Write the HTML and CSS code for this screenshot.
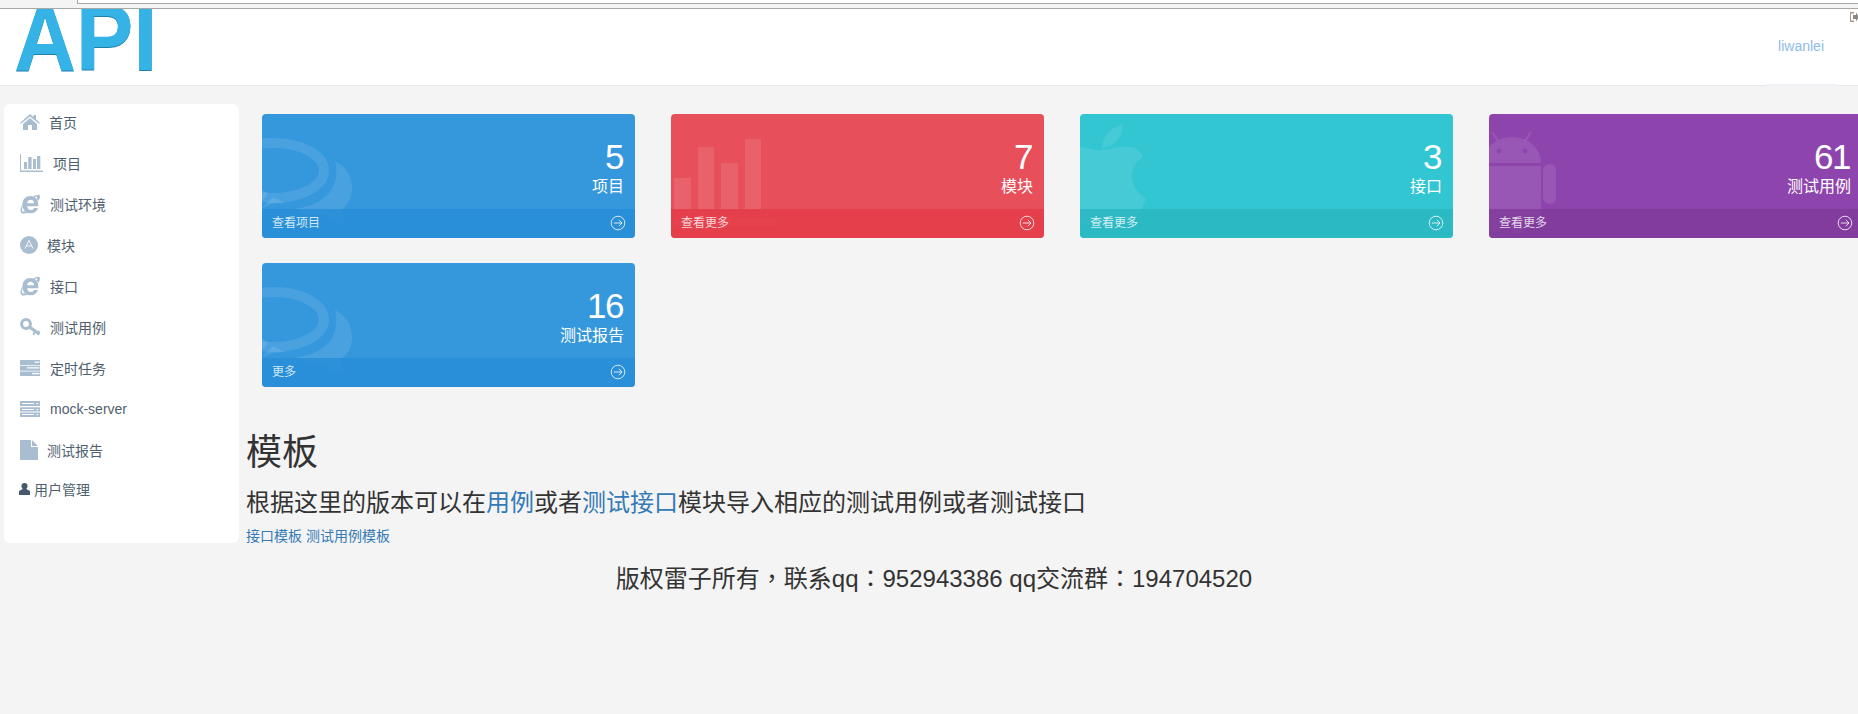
FILE: index.html

```html
<!DOCTYPE html>
<html lang="en">

<head>
  <meta charset="UTF-8">
  <meta name="viewport" content="width=device-width, initial-scale=1.0">
  <title>API</title>
  <link rel="stylesheet" href="styles.css">
</head>

<body>

  <div class="browser-strip">
    <div class="address-box"></div>
  </div>

  <header class="topbar">
    <a class="logo" href="#"><span class="logo-text">API</span></a>
    <a class="user-link" href="#">liwanlei</a>
    <svg class="exit-icon" viewBox="0 0 10 12">
      <path d="M1 1h4v1.500H2v7h3V11H1z" fill="#a89a86" />
      <path d="M4 4h3V1.500L10 6l-3 4.500V8H4z" fill="#888" />
    </svg>
    <span class="user-underline"></span>
  </header>

  <div class="layout">
    <nav class="sidebar">
      <a class="nav-item" href="#">
        <svg class="nav-icon" viewBox="0 0 20 16"><path d="M10 0l3.500 3V1h2.500v4.300L20 9l-1 .8-9-7.300-9 7.300L0 9zM3 10l7-6 7 6v6h-5v-5H8v5H3z" /></svg>
        <span class="nav-label">首页</span>
      </a>
      <a class="nav-item" href="#">
        <svg class="nav-icon nav-icon-chart" viewBox="0 0 23 18"><path d="M0 0h1v16.500h22V18H0zM4 8h3v7H4zM8.200 3h3.400v12H8.200zM13 5h3v10h-3zM17 2h3.300v13H17z" /></svg>
        <span class="nav-label nav-label-chart">项目</span>
      </a>
      <a class="nav-item" href="#">
        <svg class="nav-icon nav-icon-ie" viewBox="0 0 20 20"><use href="#ie-shape" /></svg>
        <span class="nav-label nav-label-ie">测试环境</span>
      </a>
      <a class="nav-item" href="#">
        <svg class="nav-icon nav-icon-round" viewBox="0 0 18 18"><circle cx="9" cy="9" r="9" /><path d="M5 12.500L9 4.500l4 8M6.500 10h5" fill="none" stroke="#fff" stroke-width="0.900" /></svg>
        <span class="nav-label">模块</span>
      </a>
      <a class="nav-item" href="#">
        <svg class="nav-icon nav-icon-ie" viewBox="0 0 20 20"><use href="#ie-shape" /></svg>
        <span class="nav-label nav-label-ie">接口</span>
      </a>
      <a class="nav-item" href="#">
        <svg class="nav-icon nav-icon-key" viewBox="0 0 20 18">
          <circle cx="6" cy="6" r="4.400" fill="none" stroke="#a9bdd0" stroke-width="3" />
          <path d="M9.500 9l9 6.500" fill="none" stroke="#a9bdd0" stroke-width="3" />
          <path d="M14.500 14l-1.200 3M18 13l1.500 1.500-1.500 2.500" fill="none" stroke="#a9bdd0" stroke-width="1.800" />
        </svg>
        <span class="nav-label nav-label-ie">测试用例</span>
      </a>
      <a class="nav-item" href="#">
        <svg class="nav-icon nav-icon-server" viewBox="0 0 20 16"><path fill-rule="evenodd" d="M0 0h20v5H0zM14.500 1.500v1.200h5V1.500zM0 5.700h20v5H0zM7 7.200v1.200h12.500V7.200zM0 11.500h20V16H0zM12 13v1.200h7.500V13z" /></svg>
        <span class="nav-label nav-label-ie">定时任务</span>
      </a>
      <a class="nav-item" href="#">
        <svg class="nav-icon nav-icon-server" viewBox="0 0 20 16"><path fill-rule="evenodd" d="M0 0h20v5H0zM2 2v1h12V2zM16.500 2v1.200h1.600V2zM0 6.300h20v4.300H0zM2 8v1h12V8zM16.500 8v1.200h1.600V8zM0 11.500h20V16H0zM2 13v1h12v-1zM16.500 13v1.200h1.600V13z" /></svg>
        <span class="nav-label nav-label-ie">mock-server</span>
      </a>
      <a class="nav-item" href="#">
        <svg class="nav-icon nav-icon-file" viewBox="0 0 18 20"><path d="M0 0h11v7h7v13H0zM12 0l6 6h-6z" /></svg>
        <span class="nav-label">测试报告</span>
      </a>
      <a class="nav-item nav-item-small" href="#">
        <svg class="user-icon" viewBox="0 0 11 12"><path d="M5.500 0a3 3 0 0 1 3 3.300c0 1-.5 2-1.200 2.700L11 8v4H0V8l3.700-2C3 5.300 2.500 4.300 2.500 3.300a3 3 0 0 1 3-3.300z" /></svg>
        <span>用户管理</span>
      </a>
    </nav>

    <main class="content">
      <div class="stat-grid">
        <div class="stat-card stat-blue">
          <svg class="stat-bg" viewBox="0 0 110 124"><use href="#chat-shape" /></svg>
          <div class="stat-body">
            <div class="stat-number">5</div>
            <div class="stat-label">项目</div>
          </div>
          <a class="stat-more" href="#"><span>查看项目</span><svg class="arrow" viewBox="0 0 16 16"><use href="#arrow-shape" /></svg></a>
        </div>

        <div class="stat-card stat-red">
          <svg class="stat-bg" viewBox="0 0 110 124"><path d="M3 64h17v32H3zM27 33h16v63H27zM50 49h17v47H50zM74 25h16v71H74zM3 104h103v8H3z" /></svg>
          <div class="stat-body">
            <div class="stat-number">7</div>
            <div class="stat-label">模块</div>
          </div>
          <a class="stat-more" href="#"><span>查看更多</span><svg class="arrow" viewBox="0 0 16 16"><use href="#arrow-shape" /></svg></a>
        </div>

        <div class="stat-card stat-teal">
          <svg class="stat-bg" viewBox="0 0 110 124"><path d="M22 34c0-11 9-21 21-24 0 12-8 23-21 24zM0 33c9 1 15 4 22 3 9-1 19-5 30-3 4 1 8 4 11 10-7 4-11 11-11 19 0 10 6 18 14 22-1 4-3 8-5 12-4 8-9 15-14 15H0z" /></svg>
          <div class="stat-body">
            <div class="stat-number">3</div>
            <div class="stat-label">接口</div>
          </div>
          <a class="stat-more" href="#"><span>查看更多</span><svg class="arrow" viewBox="0 0 16 16"><use href="#arrow-shape" /></svg></a>
        </div>

        <div class="stat-card stat-purple">
          <svg class="stat-bg" viewBox="0 0 110 124">
            <path fill-rule="evenodd" d="M-6 49A29 26 0 0 1 52 49zM10 34.500a2.500 2.500 0 1 0 .01 0zM36 34.500a2.500 2.500 0 1 0 .01 0z" />
            <path d="M3.500 18.500L9 27M41.500 18.500L36 27" fill="none" stroke="#fff" stroke-width="2" stroke-opacity="0.100" />
            <path d="M0 52h52v48c0 5-4 8-9 8h-7v5c0 4-3 6-7 6s-7-2-7-6v-5h-9v5c0 3-2 5-5 5H0z" />
            <rect x="54" y="50" width="13" height="40" rx="6.500" />
          </svg>
          <div class="stat-body">
            <div class="stat-number">61</div>
            <div class="stat-label">测试用例</div>
          </div>
          <a class="stat-more" href="#"><span>查看更多</span><svg class="arrow" viewBox="0 0 16 16"><use href="#arrow-shape" /></svg></a>
        </div>

        <div class="stat-card stat-blue">
          <svg class="stat-bg" viewBox="0 0 110 124"><use href="#chat-shape" /></svg>
          <div class="stat-body">
            <div class="stat-number">16</div>
            <div class="stat-label">测试报告</div>
          </div>
          <a class="stat-more" href="#"><span>更多</span><svg class="arrow" viewBox="0 0 16 16"><use href="#arrow-shape" /></svg></a>
        </div>
      </div>

      <h1 class="page-title">模板</h1>
      <h3 class="page-desc">根据这里的版本可以在<a href="#">用例</a>或者<a href="#">测试接口</a>模块导入相应的测试用例或者测试接口</h3>
      <p class="template-links"><a href="#">接口模板</a> <a href="#">测试用例模板</a></p>
    </main>
  </div>

  <footer class="copyright">版权雷子所有，联系qq：952943386 qq交流群：194704520</footer>

  <svg class="icon-defs" aria-hidden="true">
    <defs>
      <g id="ie-shape">
        <path transform="translate(-2.200 -2) scale(1.170)" fill-rule="evenodd" d="M10.800 3.500c4 0 6.700 3 6.700 7.200v1.500H8c.2 2 1.400 3.100 3.200 3.100 1.200 0 2.300-.6 2.800-1.700h3.300c-1 3-3.400 4.600-6.300 4.600-4.200 0-7-3-7-7.400s2.800-7.300 6.800-7.300zM14 9.700c-.2-1.800-1.400-3-3-3-1.700 0-2.800 1.200-3 3z" />
        <path d="M13.500 2.500c2.500-1.500 5-2.300 6-1.300s.3 3.500-1.200 5.800c-.5-1-1.100-1.800-1.700-2.500.6-.9.800-1.500.6-1.800-.4-.4-1.700 0-2.900.6zM3 9.500C1 12.800 0 16 .8 18c.9 2 4 2 7 .5-1.200-.2-2.200-.7-3-1.300-1.300.4-2.300.4-2.600-.2-.4-1 .2-3.800.8-7.500z" />
      </g>
      <g id="chat-shape">
        <ellipse cx="12" cy="56.500" rx="50" ry="27.500" fill="none" stroke="#fff" stroke-width="10" stroke-opacity="0.100" />
        <path d="M0 76l6 3-2 4-4 3zM0 94l11-11 12 6-13 1z" />
        <path d="M73 47C85 53 90 64 90 74 90 84 86 91 79 96 80 102 82 107 84 111 74 110 66 106 58 100 50 100 40 98 31 95 45 94 60 88 68 78 74 70 76 58 73 47z" />
      </g>
      <g id="arrow-shape" fill="none" stroke="currentColor" stroke-width="1">
        <circle cx="8" cy="8" r="6.800" />
        <path d="M3.800 8h8.200M8.800 4.800L12 8l-3.200 3.200" />
      </g>
    </defs>
  </svg>

</body>

</html>
```

FILE: styles.css

```css
* {
  box-sizing: border-box;
}

html,
body {
  height: 100%;
}

body {
  margin: 0;
  font-family: "Liberation Sans", "Noto Sans CJK SC", sans-serif;
  font-size: 14px;
  color: #333;
  background-color: #f4f4f4;
  overflow: hidden;
}

a {
  color: #337ab7;
  text-decoration: none;
}

.browser-strip {
  height: 9px;
  background-color: #f4f4f4;
  border-bottom: 1px solid #a8a8a8;
}

.address-box {
  height: 4px;
  margin-left: 77px;
  background-color: #fff;
  border-left: 1px solid #a8a8a8;
  border-bottom: 1px solid #a8a8a8;
}

.topbar {
  position: relative;
  display: flex;
  justify-content: space-between;
  height: 77px;
  background-color: #fff;
  border-bottom: 1px solid #e7e9ee;
}

.logo {
  display: block;
  width: 170px;
  height: 76px;
  overflow: hidden;
}

.logo-text {
  display: block;
  margin: -13px 0 0 14px;
  font-size: 86px;
  font-weight: bold;
  line-height: 90px;
  color: #35b3e6;
  transform: scaleY(1.08);
  transform-origin: 0 100%;
  text-shadow: 0 1px 0 #1f7fa8;
}

.user-link {
  margin: 29px 34px 0 0;
  height: 16px;
  line-height: 16px;
  color: #8fbbe8;
}

.exit-icon {
  position: absolute;
  top: 2px;
  right: -1px;
  width: 10px;
  height: 12px;
}

.user-underline {
  position: absolute;
  right: 22px;
  bottom: -1px;
  width: 70px;
  height: 2px;
  background-color: #eef0f5;
}

.layout {
  display: flex;
  align-items: flex-start;
  padding: 18px 0 0 4px;
}

.sidebar {
  flex: none;
  display: flex;
  flex-direction: column;
  width: 235px;
  height: 439px;
  background-color: #fff;
  border-radius: 6px;
}

.nav-item {
  display: flex;
  align-items: center;
  height: 41px;
  padding: 0 0 5px 16px;
  color: #4f5f6f;
}

.nav-icon {
  flex: none;
  width: 20px;
  height: 16px;
  margin-right: 9px;
  fill: #a9bdd0;
}

.nav-icon-chart {
  width: 23px;
  height: 18px;
  margin-right: 10px;
}

.nav-icon-ie {
  height: 20px;
  margin-right: 10px;
}

.nav-icon-key {
  height: 18px;
  margin-right: 10px;
}

.nav-icon-server {
  margin-right: 10px;
}

.nav-icon-round {
  width: 18px;
  height: 18px;
  margin-right: 9px;
}

.nav-icon-file {
  width: 18px;
  height: 20px;
  margin-right: 9px;
}

.nav-item-small {
  height: 36px;
  padding-left: 15px;
}

.user-icon {
  width: 11px;
  height: 12px;
  margin-right: 4px;
  fill: #46586c;
}

.content {
  flex: none;
  width: 1619px;
  padding: 10px 0 0 7px;
}

.stat-grid {
  display: grid;
  grid-template-columns: repeat(4, 373px);
  gap: 25px 36px;
  margin-left: 16px;
}

.stat-card {
  position: relative;
  height: 124px;
  border-radius: 4px;
  overflow: hidden;
  color: #fff;
}

.stat-blue {
  background-color: #3598dc;
}

.stat-blue .stat-more {
  background-color: rgba(39, 141, 215, 0.8);
}

.stat-red {
  background-color: #e7505a;
}

.stat-red .stat-more {
  background-color: rgba(227, 59, 71, 0.8);
}

.stat-teal {
  background-color: #32c5d2;
}

.stat-teal .stat-more {
  background-color: rgba(41, 181, 192, 0.8);
}

.stat-purple {
  background-color: #8e44ad;
}

.stat-purple .stat-more {
  background-color: rgba(128, 59, 154, 0.8);
}

.stat-bg {
  position: absolute;
  top: 0;
  left: 0;
  width: 110px;
  height: 124px;
  fill: #fff;
  fill-opacity: 0.1;
}

.stat-body {
  position: relative;
  height: 95px;
  padding: 25px 11px 0 0;
  text-align: right;
}

.stat-number {
  margin-right: 1px;
  font-size: 35px;
  line-height: 36px;
  letter-spacing: -1.500px;
}

.stat-label {
  margin-top: 1px;
  font-size: 16px;
  line-height: 22px;
}

.stat-more {
  position: relative;
  display: flex;
  justify-content: space-between;
  align-items: center;
  height: 29px;
  padding: 0 9px 0 10px;
  font-size: 12px;
  color: rgba(255, 255, 255, 0.8);
}

.stat-more span {
  margin-bottom: 4px;
}

.arrow {
  width: 16px;
  height: 16px;
  margin-bottom: 1px;
}

.page-title {
  margin: 46px 0 0;
  font-size: 36px;
  font-weight: normal;
  line-height: 40px;
  color: #333;
}

.page-desc {
  margin: 17px 0 0;
  font-size: 24px;
  font-weight: normal;
  line-height: 26px;
  color: #333;
}

.template-links {
  margin: 10px 0 0;
  line-height: 20px;
}

.copyright {
  margin: 20px 0 0 10px;
  font-family: "Liberation Sans", "Noto Sans CJK TC", sans-serif;
  font-size: 24px;
  line-height: 26px;
  text-align: center;
  color: #333;
}

.icon-defs {
  position: absolute;
  width: 0;
  height: 0;
}
```
